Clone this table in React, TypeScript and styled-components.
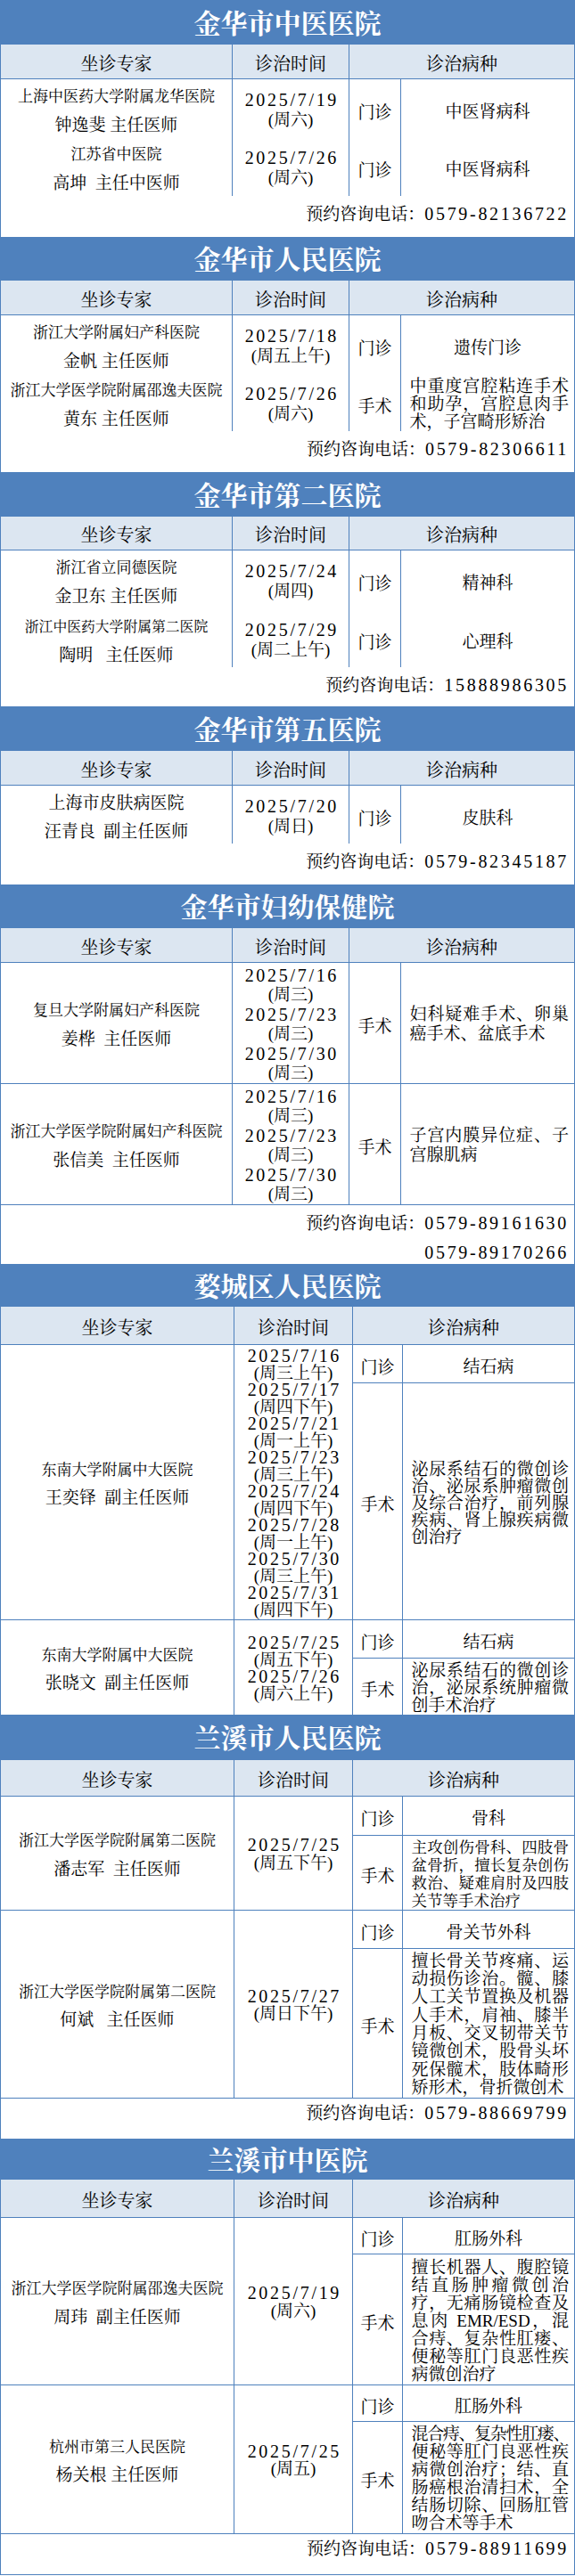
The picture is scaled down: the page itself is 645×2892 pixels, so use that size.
import React from "react";
import styled, { createGlobalStyle } from "styled-components";

const BLUE = "#4f81bd";
const HEAD_BG = "#dce6f1";
const FONT = `"Liberation Serif", "Noto Serif CJK SC", "Noto Sans CJK SC", serif`;

const GlobalStyle = createGlobalStyle`
  html, body { margin: 0; padding: 0; background: #fff; }
  body { font-family: ${FONT}; color: #000; }
  * { box-sizing: border-box; }
`;

const Page = styled.div`
  width: 645px;
  padding: 1px;
  background: ${BLUE};
  display: flex;
  flex-direction: column;
  gap: 1px;
`;

const Section = styled.section`
  display: flex;
  flex-direction: column;
  gap: 1px;
  background: ${BLUE};
`;

const Title = styled.div<{ $h: number }>`
  height: ${(p) => p.$h}px;
  background: ${BLUE};
  color: #fff;
  font-size: 30px;
  line-height: 36px;
  font-weight: 700;
  display: flex;
  align-items: center;
  justify-content: center;
  padding-top: 3px;
`;

const Grid = styled.div<{ $cols: number[]; $h: number }>`
  display: grid;
  grid-template-columns: ${(p) => p.$cols.map((c) => `${c}px`).join(" ")};
  column-gap: 1px;
  height: ${(p) => p.$h}px;
`;

const HeadCell = styled.div<{ $span?: boolean }>`
  background: ${HEAD_BG};
  font-size: 20px;
  display: flex;
  align-items: center;
  justify-content: center;
  padding-top: 2px;
  grid-column: ${(p) => (p.$span ? "3 / 5" : "auto")};
`;

const ExpertCell = styled.div`
  background: #fff;
  display: flex;
  flex-direction: column;
  align-items: center;
  justify-content: center;
  padding-top: 4px;
`;

const Hosp = styled.div<{ $size: number }>`
  font-size: ${(p) => p.$size}px;
  line-height: 31.5px;
  white-space: nowrap;
`;

const Doc = styled.div`
  font-size: 19px;
  line-height: 31.5px;
  white-space: pre;
`;

const TimeCell = styled.div`
  background: #fff;
  display: flex;
  flex-direction: column;
  align-items: center;
  justify-content: center;
  padding-top: 2px;
`;

const TimeLine = styled.div<{ $num: boolean; $lh: number }>`
  line-height: ${(p) => p.$lh}px;
  white-space: nowrap;
  font-size: ${(p) => (p.$num ? 20 : 19)}px;
  letter-spacing: ${(p) => (p.$num ? "2.7px" : "0")};
  padding-left: ${(p) => (p.$num ? "2.7px" : "0")};
`;

const Treat = styled.div`
  grid-column: 3 / 5;
  display: flex;
  flex-direction: column;
  gap: 1px;
`;

const SubRow = styled.div<{ $cols: number[]; $h?: number }>`
  display: grid;
  grid-template-columns: ${(p) => `${p.$cols[2]}px ${p.$cols[3]}px`};
  column-gap: 1px;
  ${(p) => (p.$h ? `height: ${p.$h}px;` : "flex: 1;")}
`;

const Mode = styled.div`
  background: #fff;
  font-size: 19px;
  display: flex;
  align-items: center;
  justify-content: center;
  padding-top: 4px;
`;

const Disease = styled.div<{ $multi: boolean }>`
  background: #fff;
  display: flex;
  flex-direction: column;
  justify-content: center;
  padding: ${(p) => (p.$multi ? "3px 6px 0 9.5px" : "7px 0 0 0")};
`;

const DiseaseText = styled.div<{ $multi: boolean; $size: number; $lh: number }>`
  font-size: ${(p) => p.$size}px;
  line-height: ${(p) => p.$lh}px;
  text-align: ${(p) => (p.$multi ? "justify" : "center")};
`;

const Tight = styled.span`
  letter-spacing: -1.5px;
`;

const PhoneRow = styled.div<{ $h: number; $pt: number }>`
  background: #fff;
  height: ${(p) => p.$h}px;
  padding: ${(p) => p.$pt}px 6px 0 0;
  text-align: right;
  font-size: 19px;
  line-height: 32px;
`;

const Num = styled.span`
  font-size: 20px;
  letter-spacing: 2.7px;
`;

type Sub = {
  mode: string;
  h?: number;
  text: React.ReactNode;
  multi?: boolean;
  size?: number;
  lh?: number;
};

type Row = {
  h: number;
  hosp: string;
  hospSize?: number;
  doc: string;
  times: string[];
  subs: Sub[];
};

type Sec = {
  title: string;
  titleH: number;
  headH: number;
  cols: number[];
  tlh: number;
  rows: Row[];
  phones?: string[];
  phoneH?: number;
  phonePt?: number;
};

const A = [259, 130, 57, 194];
const B = [261, 132, 55, 192];

const sections: Sec[] = [
  {
    title: "金华市中医医院",
    titleH: 48,
    headH: 38,
    cols: A,
    tlh: 22.7,
    phones: ["0579-82136722"],
    phoneH: 46,
    phonePt: 4,
    rows: [
      {
        h: 64,
        hosp: "上海中医药大学附属龙华医院",
        doc: "钟逸斐 主任医师",
        times: ["2025/7/19", "(周六)"],
        subs: [{ mode: "门诊", text: "中医肾病科" }],
      },
      {
        h: 65,
        hosp: "江苏省中医院",
        doc: "高坤  主任中医师",
        times: ["2025/7/26", "(周六)"],
        subs: [{ mode: "门诊", text: "中医肾病科" }],
      },
    ],
  },
  {
    title: "金华市人民医院",
    titleH: 47,
    headH: 38,
    cols: A,
    tlh: 22.7,
    phones: ["0579-82306611"],
    phoneH: 46,
    phonePt: 4,
    rows: [
      {
        h: 64,
        hosp: "浙江大学附属妇产科医院",
        doc: "金帆 主任医师",
        times: ["2025/7/18", "(周五上午)"],
        subs: [{ mode: "门诊", text: "遗传门诊" }],
      },
      {
        h: 64,
        hosp: "浙江大学医学院附属邵逸夫医院",
        doc: "黄东 主任医师",
        times: ["2025/7/26", "(周六)"],
        subs: [
          {
            mode: "手术",
            text: "中重度宫腔粘连手术和助孕，宫腔息肉手术，子宫畸形矫治",
            multi: true,
            lh: 20.3,
          },
        ],
      },
    ],
  },
  {
    title: "金华市第二医院",
    titleH: 48,
    headH: 37,
    cols: A,
    tlh: 22.7,
    phones: ["15888986305"],
    phoneH: 44,
    phonePt: 4,
    rows: [
      {
        h: 65,
        hosp: "浙江省立同德医院",
        doc: "金卫东 主任医师",
        times: ["2025/7/24", "(周四)"],
        subs: [{ mode: "门诊", text: "精神科" }],
      },
      {
        h: 64,
        hosp: "浙江中医药大学附属第二医院",
        hospSize: 15.8,
        doc: "陶明   主任医师",
        times: ["2025/7/29", "(周二上午)"],
        subs: [{ mode: "门诊", text: "心理科" }],
      },
    ],
  },
  {
    title: "金华市第五医院",
    titleH: 48,
    headH: 38,
    cols: A,
    tlh: 22.7,
    phones: ["0579-82345187"],
    phoneH: 46,
    phonePt: 4,
    rows: [
      {
        h: 64,
        hosp: "上海市皮肤病医院",
        hospSize: 19,
        doc: "汪青良  副主任医师",
        times: ["2025/7/20", "(周日)"],
        subs: [{ mode: "门诊", text: "皮肤科" }],
      },
    ],
  },
  {
    title: "金华市妇幼保健院",
    titleH: 47,
    headH: 38,
    cols: A,
    tlh: 22,
    phones: ["0579-89161630", "0579-89170266"],
    phoneH: 66,
    phonePt: 4,
    rows: [
      {
        h: 135,
        hosp: "复旦大学附属妇产科医院",
        doc: "姜桦  主任医师",
        times: ["2025/7/16", "(周三)", "2025/7/23", "(周三)", "2025/7/30", "(周三)"],
        subs: [
          {
            mode: "手术",
            text: "妇科疑难手术、卵巢癌手术、盆底手术",
            multi: true,
            lh: 21.7,
          },
        ],
      },
      {
        h: 135,
        hosp: "浙江大学医学院附属妇产科医院",
        doc: "张信美  主任医师",
        times: ["2025/7/16", "(周三)", "2025/7/23", "(周三)", "2025/7/30", "(周三)"],
        subs: [
          {
            mode: "手术",
            text: "子宫内膜异位症、子宫腺肌病",
            multi: true,
            lh: 21.7,
          },
        ],
      },
    ],
  },
  {
    title: "婺城区人民医院",
    titleH: 46,
    headH: 42,
    cols: B,
    tlh: 19,
    rows: [
      {
        h: 308,
        hosp: "东南大学附属中大医院",
        doc: "王奕铎  副主任医师",
        times: [
          "2025/7/16", "(周三上午)",
          "2025/7/17", "(周四下午)",
          "2025/7/21", "(周一上午)",
          "2025/7/23", "(周三上午)",
          "2025/7/24", "(周四下午)",
          "2025/7/28", "(周一上午)",
          "2025/7/30", "(周三上午)",
          "2025/7/31", "(周四下午)",
        ],
        subs: [
          { mode: "门诊", h: 42, text: "结石病" },
          {
            mode: "手术",
            text: "泌尿系结石的微创诊治、泌尿系肿瘤微创及综合治疗，前列腺疾病、肾上腺疾病微创治疗",
            multi: true,
            lh: 19,
          },
        ],
      },
      {
        h: 106,
        hosp: "东南大学附属中大医院",
        doc: "张晓文  副主任医师",
        times: ["2025/7/25", "(周五下午)", "2025/7/26", "(周六上午)"],
        subs: [
          { mode: "门诊", h: 42, text: "结石病" },
          {
            mode: "手术",
            text: "泌尿系结石的微创诊治，泌尿系统肿瘤微创手术治疗",
            multi: true,
            lh: 19.5,
          },
        ],
      },
    ],
  },
  {
    title: "兰溪市人民医院",
    titleH: 49,
    headH: 40,
    cols: B,
    tlh: 19.2,
    phones: ["0579-88669799"],
    phoneH: 45,
    phonePt: 0,
    rows: [
      {
        h: 127,
        hosp: "浙江大学医学院附属第二医院",
        doc: "潘志军  主任医师",
        times: ["2025/7/25", "(周五下午)"],
        subs: [
          { mode: "门诊", h: 43, text: "骨科" },
          {
            mode: "手术",
            text: "主攻创伤骨科、四肢骨盆骨折，擅长复杂创伤救治、疑难肩肘及四肢关节等手术治疗",
            multi: true,
            size: 17.5,
            lh: 20,
          },
        ],
      },
      {
        h: 210,
        hosp: "浙江大学医学院附属第二医院",
        doc: "何斌   主任医师",
        times: ["2025/7/27", "(周日下午)"],
        subs: [
          { mode: "门诊", h: 42, text: "骨关节外科" },
          {
            mode: "手术",
            text: "擅长骨关节疼痛、运动损伤诊治。髋、膝人工关节置换及机器人手术，肩袖、膝半月板、交叉韧带关节镜微创术，股骨头坏死保髋术，肢体畸形矫形术，骨折微创术",
            multi: true,
            lh: 20.3,
          },
        ],
      },
    ],
  },
  {
    title: "兰溪市中医院",
    titleH: 44,
    headH: 42,
    cols: B,
    tlh: 19.2,
    phones: ["0579-88911699"],
    phoneH: 45,
    phonePt: 0,
    rows: [
      {
        h: 187,
        hosp: "浙江大学医学院附属邵逸夫医院",
        doc: "周玮  副主任医师",
        times: ["2025/7/19", "(周六)"],
        subs: [
          { mode: "门诊", h: 40, text: "肛肠外科" },
          {
            mode: "手术",
            text: "擅长机器人、腹腔镜结直肠肿瘤微创治疗，无痛肠镜检查及息肉 EMR/ESD，混合痔、复杂性肛瘘、便秘等肛门良恶性疾病微创治疗",
            multi: true,
            lh: 20,
          },
        ],
      },
      {
        h: 166,
        hosp: "杭州市第三人民医院",
        doc: "杨关根 主任医师",
        times: ["2025/7/25", "(周五)"],
        subs: [
          { mode: "门诊", h: 40, text: "肛肠外科" },
          {
            mode: "手术",
            text: (
              <>
                <Tight>混合痔、复杂性肛瘘、</Tight>
                便秘等肛门良恶性疾病微创治疗；结、直肠癌根治清扫术，全结肠切除、回肠肛管吻合术等手术
              </>
            ),
            multi: true,
            lh: 20,
          },
        ],
      },
    ],
  },
];

function HospitalSection({ s }: { s: Sec }) {
  return (
    <Section>
      <Title $h={s.titleH}>{s.title}</Title>
      <Grid $cols={s.cols} $h={s.headH}>
        <HeadCell>坐诊专家</HeadCell>
        <HeadCell>诊治时间</HeadCell>
        <HeadCell $span>诊治病种</HeadCell>
      </Grid>
      {s.rows.map((r, i) => (
        <Grid key={i} $cols={s.cols} $h={r.h}>
          <ExpertCell>
            <Hosp $size={r.hospSize ?? 17}>{r.hosp}</Hosp>
            <Doc>{r.doc}</Doc>
          </ExpertCell>
          <TimeCell>
            {r.times.map((t, j) => (
              <TimeLine key={j} $num={/^\d/.test(t)} $lh={s.tlh}>
                {t}
              </TimeLine>
            ))}
          </TimeCell>
          <Treat>
            {r.subs.map((sub, k) => (
              <SubRow key={k} $cols={s.cols} $h={sub.h}>
                <Mode>{sub.mode}</Mode>
                <Disease $multi={!!sub.multi}>
                  <DiseaseText
                    $multi={!!sub.multi}
                    $size={sub.size ?? 19}
                    $lh={sub.lh ?? 24}
                  >
                    {sub.text}
                  </DiseaseText>
                </Disease>
              </SubRow>
            ))}
          </Treat>
        </Grid>
      ))}
      {s.phones && (
        <PhoneRow $h={s.phoneH ?? 46} $pt={s.phonePt ?? 4}>
          {s.phones.map((p, i) => (
            <div key={i}>
              {i === 0 && "预约咨询电话："}
              <Num>{p}</Num>
            </div>
          ))}
        </PhoneRow>
      )}
    </Section>
  );
}

export default function App() {
  return (
    <>
      <GlobalStyle />
      <Page>
        {sections.map((s, i) => (
          <HospitalSection key={i} s={s} />
        ))}
      </Page>
    </>
  );
}
